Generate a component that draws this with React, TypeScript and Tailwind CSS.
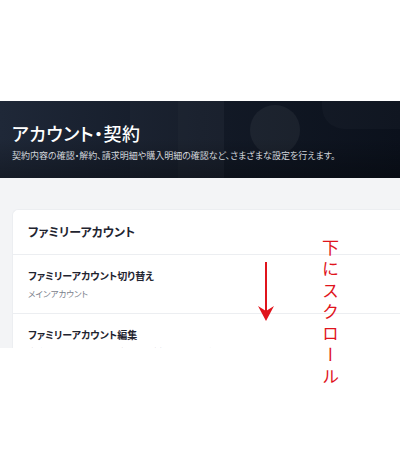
const jp = "font-['Noto_Sans_CJK_JP','Noto_Sans',sans-serif] [font-feature-settings:'palt']";

export default function App() {
  return (
    <div className={`relative w-[400px] h-[450px] bg-white ${jp}`}>
      <div className="h-[101px]" />

      <div className="h-[247px] overflow-hidden bg-[#f3f4f6]">
        {/* ヘッダー帯 */}
        <section className="relative h-[77px] overflow-hidden bg-gradient-to-r from-[#1f2838] via-[#131a27] to-[#0b111c] px-3">
          <div className="absolute inset-y-0 left-[130px] w-[48px] bg-white/[0.02]" />
          <div className="absolute inset-y-0 left-[178px] w-[46px] bg-white/[0.035]" />
          <div className="absolute left-[250px] top-[4px] h-[50px] w-[50px] rounded-full bg-white/[0.05]" />
          <div className="absolute top-0 right-0 h-[28px] w-[78px] rounded-bl-[22px] bg-white/[0.025]" />
          <div className="absolute inset-x-0 bottom-0 h-[40px] bg-gradient-to-b from-transparent to-black/30" />
          <div className="relative pt-[20px]">
            <h1 className="text-[18px] leading-[24px] font-medium text-white tracking-[0.5px]">
              アカウント・契約
            </h1>
            <p className="mt-[5px] text-[9px] leading-[12px] text-[#d1d5db]">
              契約内容の確認・解約、請求明細や購入明細の確認など、さまざまな設定を行えます。
            </p>
          </div>
        </section>

        {/* カード */}
        <div className="pt-[31px] pl-3">
          <div className="rounded-l-md border border-r-0 border-[#eceef1] bg-white">
            <div className="flex h-[45px] items-center border-b border-[#eceef1] px-[15px]">
              <h2 className="text-[12px] font-bold text-[#1f2430]">ファミリーアカウント</h2>
            </div>
            <div className="flex h-[59px] flex-col justify-center gap-[6px] border-b border-[#eceef1] px-[15px]">
              <p className="text-[10px] leading-[12px] font-bold text-[#1f2430]">
                ファミリーアカウント切り替え
              </p>
              <p className="text-[8.5px] leading-[10px] text-[#7b818c]">メインアカウント</p>
            </div>
            <div className="px-[15px] pt-[15px]">
              <p className="text-[10px] leading-[12px] font-bold text-[#1f2430]">
                ファミリーアカウント編集
              </p>
              <p className="mt-[5px] text-[8.5px] leading-[10px] text-[#7b818c]">
                家族のアカウントを追加・削除、視聴制限の設定を行えます。
              </p>
            </div>
          </div>
        </div>
      </div>

      {/* 注釈 */}
      <svg className="absolute left-[257px] top-[262px]" width="18" height="60" viewBox="0 0 18 60">
        <line x1="9" y1="0" x2="9" y2="50" stroke="#e0141c" strokeWidth="2" />
        <path d="M1 44 L9 59 L17 44 L9 49 Z" fill="#e0141c" />
      </svg>
      <p className="absolute left-[321px] top-[239px] text-[17px] font-normal leading-[18px] tracking-[4.5px] text-[#e0141c] [writing-mode:vertical-rl] [font-feature-settings:normal]">
        下にスクロール
      </p>
    </div>
  );
}
